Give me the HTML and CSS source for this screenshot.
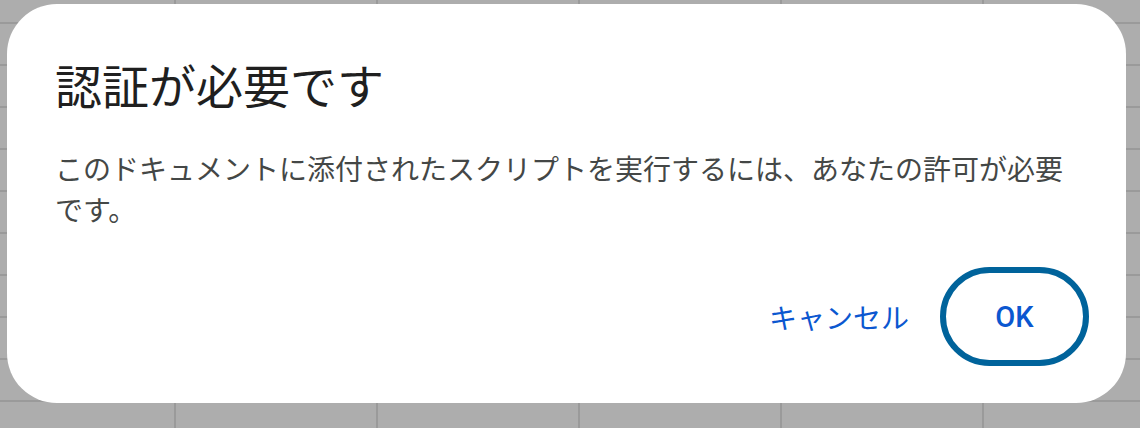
FILE: index.html
```html
<!DOCTYPE html>
<html lang="ja">
<head>
    <meta charset="UTF-8">
    <meta name="viewport" content="width=device-width, initial-scale=1.0">
    <title>認証が必要です</title>
    <link rel="stylesheet" href="styles.css">
</head>
<body>
    <div class="dialog" role="dialog" aria-labelledby="dialogTitle">
        <h1 id="dialogTitle" class="dialog-title">認証が必要です</h1>
        <p class="dialog-body">このドキュメントに添付されたスクリプトを実行するには、あなたの許可が必要です。</p>
        <div class="dialog-actions">
            <button class="text-button">キャンセル</button>
            <button class="text-button ok-button">OK</button>
        </div>
    </div>
</body>
</html>
```

FILE: styles.css
```css
html, body {
    height: 100%;
}

body {
    margin: 0;
    padding: 4px 14px 0 7px;
    box-sizing: border-box;
    font-family: "Noto Sans CJK JP", "Noto Sans", sans-serif;
    background-color: #adadad;
    /* spreadsheet grid behind the dialog */
    background-image:
        linear-gradient(to right, #9a9a9a 2px, transparent 2px),
        linear-gradient(to bottom, #9a9a9a 2px, transparent 2px);
    background-size: 202px 100%, 100% 42px;
    background-position: 174px 0, 0 22px;
}

.dialog {
    width: 1119px;
    box-sizing: border-box;
    background: #ffffff;
    border-radius: 50px;
    padding: 48px 48px 46px 48px;
    display: flex;
    flex-direction: column;
}

.dialog-title {
    margin: 0;
    font-size: 47px;
    line-height: 64px;
    font-weight: 400;
    color: #1f1f1f;
}

.dialog-body {
    margin: 32px 0 0 0;
    font-size: 28px;
    line-height: 41px;
    color: #444746;
}

.dialog-actions {
    display: flex;
    justify-content: flex-end;
    align-items: center;
    gap: 16px;
    margin-top: 46px;
    margin-right: -2px;
}

.text-button {
    height: 81px;
    padding: 0 24px;
    border: none;
    border-radius: 41px;
    background: transparent;
    color: #0b57d0;
    font-family: Roboto, "Noto Sans CJK JP", sans-serif;
    font-size: 28px;
    font-weight: 400;
    cursor: pointer;
}

.ok-button {
    width: 131px;
    padding: 0;
    font-weight: 500;
    font-size: 29px;
    outline: 6px solid #00639b;
    outline-offset: 3px;
}
```
